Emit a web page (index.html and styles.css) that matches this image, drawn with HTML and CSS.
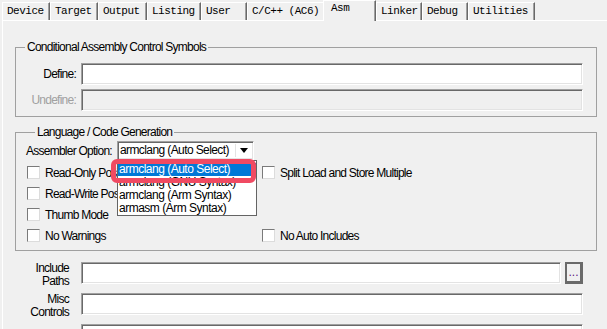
FILE: index.html
```html
<!DOCTYPE html>
<html lang="en">
<head>
  <meta charset="UTF-8">
  <title>Options for Target - Asm</title>
  <link rel="stylesheet" href="styles.css">
</head>
<body>
  <div class="tabs">
    <div class="tab">Device</div>
    <div class="tab">Target</div>
    <div class="tab">Output</div>
    <div class="tab">Listing</div>
    <div class="tab">User</div>
    <div class="tab">C/C++ (AC6)</div>
    <div class="tab active">Asm</div>
    <div class="tab">Linker</div>
    <div class="tab">Debug</div>
    <div class="tab">Utilities</div>
  </div>

  <div class="panel">
    <fieldset class="group group-symbols">
      <legend>Conditional Assembly Control Symbols</legend>
      <div class="sym-row">
        <label>Define:</label>
        <input type="text" class="field">
      </div>
      <div class="sym-row">
        <label class="disabled">Undefine:</label>
        <input type="text" class="field field-disabled" disabled>
      </div>
    </fieldset>

    <fieldset class="group group-lang">
      <legend>Language / Code Generation</legend>
      <div class="asm-row">
        <span class="asm-label">Assembler Option:</span>
        <div class="select-wrap">
          <div class="select">
            <span class="select-text">armclang (Auto Select)</span>
            <span class="select-btn"><span class="arrow"></span></span>
          </div>
          <ul class="dropdown">
            <li class="selected">armclang (Auto Select)</li>
            <li>armclang (GNU Syntax)</li>
            <li>armclang (Arm Syntax)</li>
            <li>armasm (Arm Syntax)</li>
          </ul>
          <div class="highlight"></div>
        </div>
      </div>
      <div class="checks">
        <label class="check"><span class="box"></span>Read-Only Position Independent</label>
        <label class="check"><span class="box"></span>Split Load and Store Multiple</label>
        <label class="check"><span class="box"></span>Read-Write Position Independent</label>
        <span></span>
        <label class="check"><span class="box"></span>Thumb Mode</label>
        <span></span>
        <label class="check"><span class="box"></span>No Warnings</label>
        <label class="check"><span class="box"></span>No Auto Includes</label>
      </div>
    </fieldset>

    <div class="paths">
      <label>Include<br>Paths</label>
      <div class="path-field">
        <input type="text" class="field field-short">
        <button class="browse">...</button>
      </div>
      <label>Misc<br>Controls</label>
      <input type="text" class="field">
      <label></label>
      <input type="text" class="field">
    </div>
  </div>
</body>
</html>
```

FILE: styles.css
```css
* { box-sizing: border-box; }
body { margin: 0; width: 607px; height: 329px; overflow: hidden; background: #f0f0f0; color: #000; font: 12px/14px "Liberation Sans", Arial, sans-serif; letter-spacing: -0.75px; }

/* tab strip */
.tabs { display: grid; grid-template-columns: 48px 48px 49px 54px 46px 78px 51px 46px 46px 67px; align-items: end; height: 20px; padding-left: 2px; position: relative; z-index: 1; }
.tab { height: 18px; padding: 0 0 0 4px; border-top: 1px solid #fff; border-left: 1px solid #fff; border-right: 1px solid #696969; box-shadow: inset -1px 0 #a0a0a0; font: 11px/17px "Liberation Mono", "DejaVu Sans Mono", monospace; letter-spacing: -0.5px; white-space: pre; overflow: hidden; background: #f0f0f0; }
.tab.active { height: 21px; margin: 0 0 -1px -2px; padding-left: 7px; line-height: 15px; position: relative; z-index: 2; }

.panel { margin-left: 2px; border-top: 1px solid #fff; border-left: 1px solid #fff; padding: 0 0 0 12px; }

/* group boxes */
.group { margin: 0 10px 0 0; padding: 0 11px 5px 0; border: 1px solid #a0a0a0; min-width: 0; }
.group legend { margin-left: 9px; padding: 0 2px; line-height: 14px; }
.group-symbols { margin-top: 19px; }
.group-lang { margin-top: 8px; padding: 0 0 4px 10px; }

.field { display: block; height: 22px; margin: 0; padding: 0 3px; background: #fff; border: 1px solid; border-color: #a0a0a0 #fff #fff #a0a0a0; box-shadow: inset 1px 1px #696969, inset -1px -1px #e3e3e3; font: inherit; }
.field-disabled { background: #f0f0f0; }

.sym-row { display: grid; grid-template-columns: 60px 502px; column-gap: 5px; align-items: center; margin-top: 4px; }
.sym-row:first-of-type { margin-top: 9px; }
.sym-row label { text-align: right; }
.disabled { color: #a0a0a0; }

/* assembler option combo */
.asm-row { display: flex; align-items: center; margin-top: 2px; height: 19px; }
.asm-label { width: 91px; }
.select-wrap { position: relative; }
.select { display: flex; width: 137px; height: 19px; background: #fff; border: 1px solid; border-color: #a0a0a0 #fff #fff #a0a0a0; box-shadow: inset 1px 1px #696969, inset -1px -1px #e3e3e3; }
.select-text { flex: 1; padding-left: 2px; line-height: 17px; letter-spacing: -0.6px; }
.select-btn { width: 16px; margin: 2px 2px 2px 0; display: flex; align-items: center; justify-content: center; background: #fff; border-left: 1px solid #e3e3e3; }
.arrow { width: 0; height: 0; border-left: 4px solid transparent; border-right: 4px solid transparent; border-top: 5px solid #000; }

.dropdown { position: absolute; top: 19px; left: 0; width: 140px; margin: 0; padding: 2px 0 0; list-style: none; background: #fff; border: 1px solid #646464; z-index: 3; letter-spacing: -0.5px; }
.dropdown li { height: 13px; line-height: 13px; padding-left: 1px; white-space: nowrap; }
.dropdown li.selected { background: #0078d7; color: #fff; }
.highlight { position: absolute; top: 18px; left: -6px; width: 145px; height: 24px; border: 5px solid #f04a62; border-radius: 6px; z-index: 4; }

/* check boxes */
.checks { display: grid; grid-template-columns: 235px 1fr; grid-auto-rows: 21px; margin-top: 2px; }
.check { display: flex; align-items: center; white-space: nowrap; overflow: hidden; }
.box { width: 13px; height: 13px; margin: 0 5px 0 1px; background: #fff; border: 1px solid; border-color: #7a7a7a #dcdcdc #dcdcdc #7a7a7a; }

/* include paths / misc */
.paths { display: grid; grid-template-columns: 54px 502px; grid-auto-rows: 22px; column-gap: 12px; row-gap: 9px; margin-top: 11px; }
.paths label { text-align: right; line-height: 13px; }
.path-field { display: flex; gap: 4px; }
.field-short { width: 482px; }
.browse { width: 18px; height: 22px; padding: 0 0 3px; background: #f0f0f0; border: 2px solid #6a6a6a; border-right-width: 3px; border-bottom-width: 3px; font: 12px/1 "Liberation Sans", Arial, sans-serif; color: #602080; display: flex; align-items: flex-end; justify-content: center; }
```
